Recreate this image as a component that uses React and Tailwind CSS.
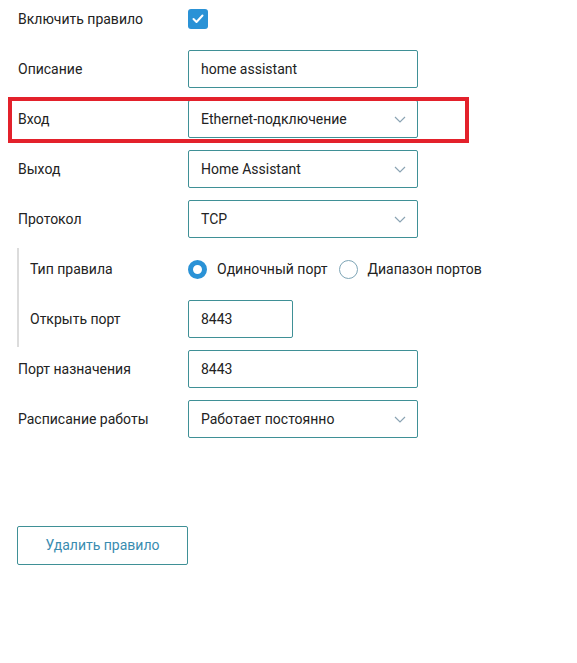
import React from 'react';

const Chevron = () => (
    <svg className="w-[12px] h-[7px]" viewBox="0 0 12 7" fill="none">
        <path d="M1 1l5 5 5-5" stroke="#8aa3b3" strokeWidth="1.2" />
    </svg>
);

const TextBox = ({ value, w = 'w-[230px]' }) => (
    <div className={`${w} h-[38px] border border-[#3f9096] rounded-[2px] bg-white flex items-center px-3 text-[14px] text-[#222]`}>
        {value}
    </div>
);

const Select = ({ value }) => (
    <div className="w-[230px] h-[38px] border border-[#3f9096] rounded-[2px] bg-white flex items-center justify-between pl-3 pr-[11px] text-[14px] text-[#222]">
        <span>{value}</span>
        <Chevron />
    </div>
);

const Row = ({ label, labelW = 'w-[170px]', h = 'h-[50px]', children, className = '' }) => (
    <div className={`relative flex items-start ${h} ${className}`}>
        <div className={`${labelW} h-[38px] flex items-center text-[14px] text-[#222]`}>{label}</div>
        {children}
    </div>
);

const App = () => {
    return (
        <div className="w-[577px] h-[663px] bg-white pl-[18px] pt-0" style={{ fontFamily: 'Roboto, "Noto Sans", sans-serif' }}>
            <Row label="Включить правило">
                <div className="mt-[9px] w-[20px] h-[20px] rounded-[3px] bg-[#2a92d6] flex items-center justify-center">
                    <svg className="w-[12px] h-[10px]" viewBox="0 0 12 10" fill="none">
                        <path d="M1.5 5l3 3 6-6.5" stroke="white" strokeWidth="2" strokeLinecap="round" strokeLinejoin="round" />
                    </svg>
                </div>
            </Row>

            <Row label="Описание">
                <TextBox value="home assistant" />
            </Row>

            <Row label="Вход">
                <Select value="Ethernet-подключение" />
                {/* red highlight frame */}
                <div className="absolute left-[-10px] top-[-3px] w-[461px] h-[46px] border-[4px] border-[#e3212b] pointer-events-none" />
            </Row>

            <Row label="Выход">
                <Select value="Home Assistant" />
            </Row>

            <Row label="Протокол">
                <Select value="TCP" />
            </Row>

            {/* nested port settings */}
            <div className="-mt-[2px] pt-[2px] -ml-[1px] pl-[11px] border-l-[2px] border-[#dcdcdc]">
                <Row label="Тип правила" labelW="w-[158px]">
                    <div className="h-[38px] flex items-center text-[14px] text-[#222]">
                        <span className="w-[19px] h-[19px] rounded-full border-[5px] border-[#2a92d6] bg-white" />
                        <span className="ml-[10px]">Одиночный порт</span>
                        <span className="ml-[12px] w-[19px] h-[19px] rounded-full border border-[#7ea5b6] bg-white" />
                        <span className="ml-[9px]">Диапазон портов</span>
                    </div>
                </Row>
                <Row label="Открыть порт" labelW="w-[158px]" h="h-[47px]">
                    <TextBox value="8443" w="w-[105px]" />
                </Row>
            </div>

            <Row label="Порт назначения" className="mt-[3px]">
                <TextBox value="8443" />
            </Row>

            <Row label="Расписание работы">
                <Select value="Работает постоянно" />
            </Row>

            <button className="mt-[76px] -ml-[1px] w-[171px] h-[39px] border border-[#3f9096] rounded-[2px] bg-white text-[14px] text-[#3a8cb0]">
                Удалить правило
            </button>
        </div>
    );
};

export default App;
